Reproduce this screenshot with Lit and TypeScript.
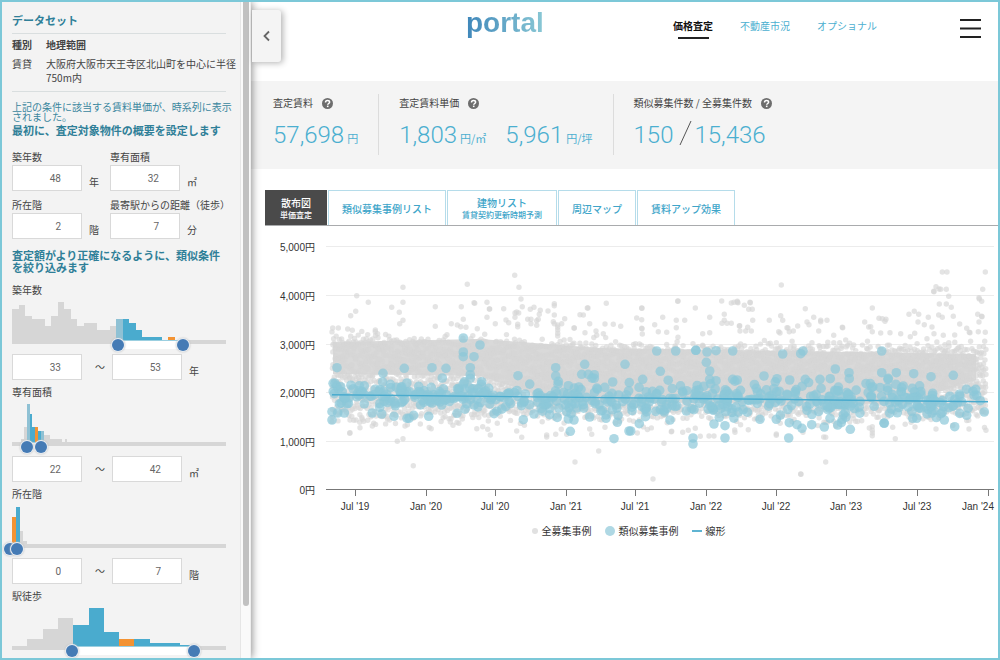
import { LitElement, html, svg, css } from "lit";
import { customElement, property } from "lit/decorators.js";

type Point = [number, number];

/* ---------- scatter data ---------- */

// Plot positions are kept on a fine grid, three steps to one chart unit.
const GRID = 3;
const HALF = 1110;

const ALL_LEFT: Point[] = [
  [764, 136], [777, 172], [622, 163], [429, 172], [290, 197], [325, 217], [429, 217], [395, 232], [287, 244],
  [272, 257], [418, 247], [429, 271], [419, 281], [526, 230], [526, 289], [604, 230], [610, 268], [642, 218],
  [644, 220], [681, 217], [688, 237], [689, 237], [681, 262], [706, 281], [731, 236], [738, 270], [746, 278],
  [783, 207], [787, 230], [765, 249], [770, 246], [776, 249], [765, 262], [773, 283], [773, 290], [822, 232],
  [811, 238], [841, 241], [838, 253], [864, 243], [883, 221], [883, 227], [883, 255], [803, 268], [813, 268],
  [830, 272], [835, 268], [813, 281], [830, 286], [880, 275], [883, 281], [905, 281], [914, 266], [943, 294],
  [942, 294], [960, 254], [970, 255], [982, 234], [984, 234], [989, 281], [1039, 220], [1035, 282], [1060, 283],
  [1082, 289], [574, 281], [592, 285], [218, 294], [235, 294], [263, 297], [277, 301], [346, 300], [346, 305],
  [893, 285], [893, 292], [893, 300], [893, 310], [893, 318], [618, 292], [602, 290], [652, 296], [1030, 311],
  [975, 308], [1008, 303], [1010, 316], [269, 610], [270, 608], [300, 593], [337, 588], [412, 634], [429, 626],
  [435, 588], [460, 707], [481, 582], [571, 576], [683, 598], [691, 615], [712, 580], [770, 603], [785, 622],
  [860, 615], [860, 621], [887, 613], [904, 598], [945, 696], [1016, 663], [995, 613], [270, 570], [288, 570],
  [307, 568], [920, 613], [989, 597], [1035, 592], [607, 567], [685, 573],
];

const ALL_RIGHT: Point[] = [
  [35, 234], [36, 235], [20, 264], [35, 269], [35, 295], [36, 296], [37, 312], [74, 284], [85, 305], [98, 262],
  [110, 307], [144, 213], [143, 214], [139, 271], [139, 293], [144, 322], [164, 271], [196, 234], [239, 262],
  [218, 311], [239, 308], [275, 213], [283, 253], [283, 271], [276, 280], [291, 280], [304, 280], [304, 219],
  [312, 217], [322, 214], [324, 218], [322, 217], [343, 226], [356, 238], [360, 217], [361, 218], [367, 238],
  [368, 271], [329, 287], [328, 288], [353, 292], [364, 303], [330, 303], [347, 303], [418, 271], [454, 165],
  [452, 257], [458, 271], [471, 293], [474, 294], [478, 305], [490, 303], [503, 288], [526, 236], [531, 276],
  [537, 284], [551, 262], [572, 271], [572, 275], [591, 271], [566, 303], [637, 292], [638, 293], [611, 316],
  [704, 276], [716, 291], [722, 290], [727, 305], [727, 234], [747, 265], [757, 266], [768, 268], [765, 274],
  [780, 308], [752, 309], [812, 311], [837, 253], [853, 244], [866, 253], [864, 276], [883, 284], [895, 262],
  [906, 291], [912, 311], [854, 310], [841, 320], [937, 126], [951, 126], [1066, 126], [918, 170], [911, 184],
  [912, 185], [927, 177], [932, 178], [949, 178], [956, 199], [928, 222], [949, 222], [964, 232], [926, 255],
  [937, 262], [970, 259], [989, 282], [1058, 178], [1047, 203], [1048, 207], [1055, 214], [1043, 253],
  [1055, 259], [1056, 260], [1047, 276], [1010, 295], [1018, 307], [1020, 308], [1045, 305], [1066, 307],
  [940, 316], [974, 315], [1064, 334], [446, 305], [450, 309], [22, 609], [102, 640], [69, 747], [125, 604],
  [124, 605], [158, 607], [175, 601], [211, 619], [237, 618], [252, 618], [314, 600], [315, 607], [355, 599],
  [439, 612], [439, 616], [512, 732], [513, 733], [581, 621], [587, 622], [587, 696], [519, 607], [796, 626],
  [727, 590], [727, 601], [727, 609], [727, 617], [718, 594], [855, 591], [918, 597], [1017, 597], [1068, 601],
  [788, 592], [695, 572], [196, 595],
];

const SIMILAR_LEFT: Point[] = [
  [231, 413], [369, 430], [433, 415], [516, 413], [558, 415], [547, 444], [610, 324], [610, 366], [610, 380],
  [660, 345], [642, 380], [631, 413], [631, 434], [631, 445], [774, 437], [887, 413], [887, 438], [895, 454],
  [925, 467], [974, 403], [965, 433], [985, 433], [1003, 434], [1003, 445], [1095, 403], [1058, 456], [216, 570],
  [216, 545], [233, 549], [253, 549], [337, 549], [365, 552], [402, 559], [441, 565], [461, 556], [506, 559],
  [591, 550], [790, 569], [822, 552], [931, 604], [925, 567], [942, 570], [989, 561], [1038, 565], [1062, 626],
  [1072, 577], [1107, 603], [391, 463], [225, 460], [242, 470], [476, 469], [298, 467], [665, 455], [664, 463],
  [610, 462], [640, 476], [655, 476], [447, 565], [916, 524], [920, 545], [950, 534], [545, 525], [642, 525],
];

const SIMILAR_RIGHT: Point[] = [
  [80, 363], [137, 363], [197, 361], [198, 361], [231, 366], [258, 362], [308, 363], [91, 424], [229, 397],
  [239, 423], [38, 448], [258, 452], [239, 448], [308, 448], [322, 450], [402, 438], [458, 372], [512, 371],
  [519, 363], [616, 417], [657, 428], [658, 446], [755, 363], [755, 428], [799, 428], [851, 431], [903, 440],
  [970, 436], [774, 448], [775, 445], [441, 446], [479, 450], [526, 448], [570, 448], [601, 446], [189, 624],
  [189, 642], [285, 624], [285, 587], [476, 624], [28, 581], [2, 603], [120, 570], [252, 582], [390, 568],
  [439, 568], [478, 578], [501, 584], [516, 595], [545, 584], [583, 591], [623, 585], [661, 598], [762, 579],
  [763, 580], [860, 565], [974, 590], [1063, 546], [943, 570], [1010, 556], [1037, 478], [1051, 512],
  [911, 541], [634, 578], [637, 568], [728, 470], [848, 565], [268, 562], [287, 545], [50, 545],
];

function randomSource(seed: number) {
  return () => {
    seed = (seed + 0x6d2b79f5) | 0;
    let t = Math.imul(seed ^ (seed >>> 15), 1 | seed);
    t = (t + Math.imul(t ^ (t >>> 7), 61 | t)) ^ t;
    return ((t ^ (t >>> 14)) >>> 0) / 4294967296;
  };
}

const shift = (points: Point[]): Point[] => points.map(([x, y]) => [x + HALF, y]);

function allListings(): Point[] {
  const rnd = randomSource(7);
  const points: Point[] = [];
  for (let column = 0; column < 330; column++) {
    const x = 216 + column * 5.95;
    const t = column / 329;
    const top = 308 + Math.min(t * 2, 1) * 34 + rnd() * 20;
    const bottom = 566 - rnd() * 26;
    for (let i = 0; i < 10; i++) {
      points.push([x + rnd() * 5, top + (bottom - top) * ((i + rnd()) / 10)]);
    }
    if (rnd() < 0.25) points.push([x, top - rnd() * 18]);
    if (rnd() < 0.35) points.push([x, bottom + rnd() * 34]);
  }
  return [...points, ...ALL_LEFT, ...shift(ALL_RIGHT)];
}

function similarListings(): Point[] {
  const rnd = randomSource(21);
  const points: Point[] = [];
  const spread = () => (rnd() + rnd() - 1);
  for (let i = 0; i < 130; i++) points.push([218 + rnd() * 482, 498 + spread() * 46]);
  for (let i = 0; i < 350; i++) points.push([700 + rnd() * 1330, 508 + spread() * 64]);
  for (let i = 0; i < 24; i++) points.push([2010 + rnd() * 150, 520 + spread() * 46]);
  return [...points, ...SIMILAR_LEFT, ...shift(SIMILAR_RIGHT)];
}

const place = (n: number) => Math.round((n / GRID) * 10) / 10;

@customElement("scatter-chart")
class ScatterChart extends LitElement {
  static styles = css`
    :host { display: block; }
    svg { display: block; width: 100%; height: auto; overflow: visible; }
    .axis-text { font: 10px "Liberation Sans", "Noto Sans CJK JP", sans-serif; fill: #333; }
    .end { text-anchor: end; }
    .middle { text-anchor: middle; }
    .grid { stroke: #ececec; }
    .axis { stroke: #777; }
    .core { fill: #d9d9d9; }
    .all { fill: #d6d6d6; fill-opacity: 0.65; }
    .similar { fill: #8cc8d9; fill-opacity: 0.7; }
    .trend { stroke: #4aabce; stroke-width: 1.4; }
    .legend { display: flex; justify-content: center; align-items: center; gap: 13px; margin: 8px 6px 0 0;
      padding: 0; list-style: none; font-size: 10px; line-height: 16px; color: #333; }
    .legend li { display: flex; align-items: center; gap: 4px; }
    .dot { width: 6px; height: 6px; border-radius: 50%; background: #e1e1e1; }
    .dot.big { width: 10px; height: 10px; background: #afd8e4; }
    .dash { width: 10px; height: 2px; background: #5fb4d2; }
  `;

  render() {
    const ticks: [number, string][] = [
      [95, "Jul '19"], [166, "Jan '20"], [235, "Jul '20"], [306, "Jan '21"], [375, "Jul '21"],
      [446, "Jan '22"], [516, "Jul '22"], [586, "Jan '23"], [657, "Jul '23"], [728, "Jan '24"],
    ];
    return html`
      <svg viewBox="5 0 733 285" role="img" aria-label="散布図">
        ${[5, 4, 3, 2, 1, 0].map((k, i) => {
          const y = [16, 65, 114, 162, 211, 259][i] + 0.5;
          return svg`
            <line class=${k ? "grid" : "axis"} x1="66" x2="734" y1=${y} y2=${y}></line>
            <text class="axis-text end" x="55" y=${y + 4}>${k ? k + ",000" : "0"}円</text>`;
        })}
        ${ticks.map(([x, label], i) => svg`
          <line class="axis" x1=${x + 0.5} x2=${x + 0.5} y1="260" y2="266"></line>
          <text class="axis-text ${i === 9 ? "end" : "middle"}" x=${i === 9 ? 734 : x} y="280">${label}</text>`)}
        <path class="core" d="M73 112L220 109L340 118L716 124V150L640 174L300 172L220 146L73 144Z"></path>
        ${allListings().map(([x, y]) => svg`<circle class="all" cx=${place(x)} cy=${place(y)} r="2.7"></circle>`)}
        ${similarListings().map(([x, y]) => svg`<circle class="similar" cx=${place(x)} cy=${place(y)} r="4.8"></circle>`)}
        <line class="trend" x1="72" y1="164.7" x2="728" y2="171.7"></line>
      </svg>
      <ul class="legend">
        <li><span class="dot"></span>全募集事例</li>
        <li><span class="dot big"></span>類似募集事例</li>
        <li><span class="dash"></span>線形</li>
      </ul>`;
  }
}

/* ---------- range filters ---------- */

interface Bar { h: number; c?: string; }

interface Filter {
  id: string; label: string; unit: string; from: number; to: number;
  handles: [number, number]; binWidth: number; start: number; bars: Bar[];
}

const LIGHT = "light";
const BLUE = "blue";
const ORANGE = "orange";
const bars = (...list: (number | [number, string])[]): Bar[] =>
  list.map((v) => (typeof v === "number" ? { h: v } : { h: v[0], c: v[1] }));

const FILTERS: Filter[] = [
  { id: "age", label: "築年数", unit: "年", from: 33, to: 53, handles: [106, 171], binWidth: 6.5, start: 0,
    bars: bars(31, 35, 24, 21, 21, 14, 24, 38, 31, 21, 14, 17, 17, 10, 10, 14, [21, LIGHT], [21, BLUE], [17, BLUE],
      [10, BLUE], [3, BLUE], [3, BLUE], [3, BLUE], 0, [3, ORANGE]) },
  { id: "area", label: "専有面積", unit: "㎡", from: 22, to: 42, handles: [15, 29], binWidth: 2.92, start: 3,
    bars: bars(3, 15, [38, LIGHT], [28, BLUE], [15, BLUE], [15, ORANGE], [11, BLUE], [11, LIGHT], 7, 7, 3, 3, 3, 3, 0, 3) },
  { id: "floor", label: "所在階", unit: "階", from: 0, to: 7, handles: [-2, 5], binWidth: 3.76, start: 0,
    bars: bars([27, ORANGE], [37, BLUE], 13, 3) },
  { id: "walk", label: "駅徒歩", unit: "分", from: 6, to: 13, handles: [60, 182], binWidth: 15.3, start: 1,
    bars: bars(7, 17, 28, [21, BLUE], [38, BLUE], [14, BLUE], [7, ORANGE], [7, BLUE], [3, BLUE], [3, BLUE], [1, BLUE]) },
];

@customElement("range-filter")
class RangeFilter extends LitElement {
  @property({ attribute: false }) filter!: Filter;

  static styles = css`
    :host { display: block; margin-bottom: 4px; }
    * { box-sizing: border-box; }
    .title { font-size: 10px; line-height: 16px; }
    .stack { display: grid; width: 214px; height: 53px; margin-bottom: 3px; }
    .stack > * { grid-area: 1 / 1; }
    svg { width: 214px; height: 53px; overflow: visible; }
    .gray { fill: #d6d6d6; }
    .blue { fill: #4aabce; }
    .light { fill: #8fc1d4; }
    .orange { fill: #f39333; }
    .window { fill: #fff; }
    .edge { fill: #9bcfe0; }
    input[type="range"] { appearance: none; -webkit-appearance: none; align-self: end; width: 230px; height: 12px;
      margin: 0 0 0 -8px; background: none; pointer-events: none; outline: none; }
    input[type="range"]::-webkit-slider-thumb { -webkit-appearance: none; box-sizing: border-box; width: 12px; height: 12px;
      border: 0; border-radius: 50%; background: #457bb5; box-shadow: 0 0 0 1px #e8edf2, 0 0 2px 1px #bbb; pointer-events: auto; }
    .row { display: flex; align-items: center; font-size: 10px; }
    input[type="text"] { width: 70px; height: 26px; padding: 0 20px 0 4px; border: 1px solid #d9d9d9; border-radius: 0;
      background: #fff; color: #666; font: 10px "Roboto", sans-serif; text-align: right; }
    .tilde { width: 30px; padding-left: 6px; text-align: center; }
    .unit { padding: 8px 0 0 7px; line-height: 16px; }
  `;

  render() {
    const f = this.filter;
    const [a, b] = f.handles;
    return html`
      <label class="title" for="from">${f.label}</label>
      <div class="stack">
        <svg aria-hidden="true">
          <rect class="gray" x="0" y="42" width="214" height="4"></rect>
          <rect class="window" x=${a} y="43" width=${b - a} height="8"></rect>
          <rect class="edge" x=${a} y="42" width=${b - a} height="1"></rect>
          ${f.bars.map((bar, i) => svg`<rect class=${bar.c ?? "gray"} shape-rendering="crispEdges"
            x=${(f.start + i) * f.binWidth} y=${42 - bar.h} width=${f.binWidth} height=${bar.h}></rect>`)}
        </svg>
        <input type="range" min="0" max="218" .value=${String(a + 2)} aria-label="${f.label} 下限">
        <input type="range" min="0" max="218" .value=${String(b + 2)} aria-label="${f.label} 上限">
      </div>
      <div class="row">
        <input type="text" id="from" .value=${String(f.from)}>
        <span class="tilde">～</span>
        <input type="text" id="to" aria-label="${f.label} 上限" .value=${String(f.to)}>
        <span class="unit">${f.unit}</span>
      </div>`;
  }
}

/* ---------- page ---------- */

@customElement("app-root")
class AppRoot extends LitElement {
  static styles = css`
    :host { display: grid; grid-template-columns: 249px minmax(0, 1fr); height: 100vh; box-sizing: border-box;
      border: 2px solid #7cc8d8; background: #fff; color: #444; overflow: hidden;
      font: 10px/16px "Noto Sans CJK JP", sans-serif; }
    * { box-sizing: border-box; }
    a { color: inherit; text-decoration: none; }
    button { font: inherit; }

    .side { position: relative; z-index: 2; display: grid; grid-template-columns: minmax(0, 1fr) 11px; min-height: 0;
      background: #f3f3f3; box-shadow: 1px 0 8px rgba(0, 0, 0, 0.45); }
    .side-body { min-height: 0; padding: 9px 0 0 10px; overflow: hidden auto; scrollbar-width: none; white-space: nowrap; }
    .track { border-left: 1px solid #e6e6e6; border-right: 1px solid #eee; background: #fafafa; padding: 0 2px; }
    .thumb { height: 92%; width: 6px; border-radius: 0 0 3px 3px; background: #c1c1c1; }
    .head { margin: 0; color: #2f7f98; font-size: 11px; font-weight: 700; line-height: 12px; }
    .data-title { width: 214px; padding: 3px 0 7px; border-bottom: 1px solid #d9dedf; }
    .facts { display: grid; grid-template-columns: 34px auto; row-gap: 5px; width: 214px; margin: 0; padding: 4px 0 6px;
      border-bottom: 1px solid #d9dedf; line-height: 14px; }
    .facts dt, .facts dd { margin: 0; }
    .facts .strong { font-weight: 700; }
    .note { margin: 10px 0 2px; color: #3a869e; line-height: 10px; }
    .fields { display: grid; grid-template-columns: 98px auto; row-gap: 5px; margin: 12px 0 10px; }
    .field label { display: block; line-height: 17px; }
    .field div { display: flex; align-items: center; }
    .field input { width: 70px; height: 26px; padding: 0 20px 0 4px; border: 1px solid #d9d9d9; border-radius: 0;
      background: #fff; color: #666; font: 10px "Roboto", sans-serif; text-align: right; }
    .field .unit { padding: 8px 0 0 7px; }
    .filters { margin-top: 9px; }

    .main { position: relative; display: flex; flex-direction: column; min-width: 0; }
    .collapse { position: absolute; z-index: 3; left: 1px; top: 8px; width: 29px; height: 52px; padding: 0; border: 0;
      border-radius: 0 3px 3px 0; background: #f4f4f4; box-shadow: 2px 1px 6px rgba(0, 0, 0, 0.3); }
    .collapse svg { display: block; margin: auto; }
    header { display: flex; align-items: flex-start; height: 79px; padding: 0 17px 0 0; }
    .logo { width: 207px; margin-left: 215px; font: 700 28px/32px "Liberation Sans", sans-serif; padding-top: 4px; height: 42px; }
    .logo span { display: inline-block; background: linear-gradient(90deg, #3f87ba, #8ac8d5); background-clip: text;
      -webkit-background-clip: text; color: transparent; line-height: 34px; }
    nav { display: flex; flex: 1; gap: 27px; padding-top: 16px; color: #4bafd0; }
    nav .current { display: flex; flex-direction: column; align-items: center; color: #111; font-weight: 700; }
    nav .current::after { content: ""; width: 31px; height: 2px; margin-top: 3px; background: #222; }
    .menu { padding: 0; margin-top: 16px; border: 0; background: none; height: 20px; width: 21px; }
    .menu svg { display: block; }

    .stats { display: flex; padding: 13px 0 14px 22px; background: #f4f4f4; }
    .stat { height: 61px; padding-right: 20px; margin-right: 20px; border-right: 1px solid #dcdcdc; }
    .stat:last-child { border: 0; margin: 0; padding: 0; }
    .stat-title { display: flex; align-items: center; gap: 9px; line-height: 18px; }
    .help { display: block; }
    .values { display: flex; align-items: baseline; margin-top: 8px; color: #4bafd0; font-size: 11px; line-height: 30px; }
    .figure { margin-right: 3px; font-family: "Roboto", sans-serif; font-size: 24px; font-weight: 300; }
    .next { margin-left: 19px; }
    .slash { align-self: center; margin: 0 2px 4px 3px; }

    .tabs { display: flex; gap: 1px; margin: 21px 0 0 14px; border-bottom: 1px solid #a9abad; }
    .tab { display: flex; flex-direction: column; align-items: center; justify-content: center; height: 35px;
      padding: 0 13px; border: 1px solid #b5dcea; border-bottom: 0; background: #fff; color: #40a5c9;
      font-weight: 500; line-height: 13px; white-space: nowrap; }
    .tab small { font-size: 8px; line-height: 11px; }
    .tab.double { padding: 0 14px; }
    .tab.active { border-color: #4a4a4a; background: #4a4a4a; color: #fff; }
    .chart { margin: 4px 0 0 14px; }
  `;

  private field(id: string, label: string, value: number, unit: string) {
    return html`<div class="field">
      <label for=${id}>${label}</label>
      <div><input id=${id} type="text" .value=${String(value)}><span class="unit">${unit}</span></div>
    </div>`;
  }

  private help() {
    return html`<svg class="help" width="11" height="11" viewBox="0 0 22 22" aria-hidden="true">
      <circle cx="11" cy="11" r="11" fill="#6d6d6d"></circle>
      <path d="M7 8.800C7 6.200 9 5 11.100 5c2.200 0 4.100 1.300 4.100 3.300 0 2.700-3.800 2.700-3.800 5.400" fill="none" stroke="#fff" stroke-width="3"></path>
      <rect x="9.800" y="15.200" width="3.200" height="3" fill="#fff"></rect>
    </svg>`;
  }

  render() {
    return html`
      <aside class="side">
        <div class="side-body">
          <h2 class="head data-title">データセット</h2>
          <dl class="facts">
            <dt class="strong">種別</dt><dd class="strong">地理範囲</dd>
            <dt>賃貸</dt><dd>大阪府大阪市天王寺区北山町を中心に半径<br>750m内</dd>
          </dl>
          <p class="note">上記の条件に該当する賃料単価が、時系列に表示<br>されました。</p>
          <h3 class="head">最初に、査定対象物件の概要を設定します</h3>
          <div class="fields">
            ${this.field("years", "築年数", 48, "年")}
            ${this.field("size", "専有面積", 32, "㎡")}
            ${this.field("storey", "所在階", 2, "階")}
            ${this.field("distance", "最寄駅からの距離（徒歩）", 7, "分")}
          </div>
          <h3 class="head">査定額がより正確になるように、類似条件<br>を絞り込みます</h3>
          <div class="filters">
            ${FILTERS.map((f) => html`<range-filter .filter=${f}></range-filter>`)}
          </div>
        </div>
        <div class="track"><div class="thumb"></div></div>
      </aside>

      <main class="main">
        <button class="collapse" aria-label="閉じる">
          <svg width="10" height="12" viewBox="0 0 10 12"><path d="M7 1.500L2.500 6L7 10.500" fill="none" stroke="#666" stroke-width="1.800"></path></svg>
        </button>
        <header>
          <a class="logo" href="#"><span>portal</span></a>
          <nav>
            <a class="current" href="#">価格査定</a>
            <a href="#">不動産市況</a>
            <a href="#">オプショナル</a>
          </nav>
          <button class="menu" aria-label="メニュー">
            <svg width="21" height="21"><path d="M0 2H21M0 10.500H21M0 19H21" stroke="#222" stroke-width="2"></path></svg>
          </button>
        </header>

        <section class="stats">
          <div class="stat">
            <div class="stat-title">査定賃料${this.help()}</div>
            <div class="values"><span class="figure">57,698</span>円</div>
          </div>
          <div class="stat">
            <div class="stat-title">査定賃料単価${this.help()}</div>
            <div class="values">
              <span class="figure">1,803</span>円/㎡
              <span class="figure next">5,961</span>円/坪
            </div>
          </div>
          <div class="stat">
            <div class="stat-title">類似募集件数 / 全募集件数${this.help()}</div>
            <div class="values">
              <span class="figure">150</span>
              <svg class="slash" width="13" height="26"><path d="M1 25L12 1" stroke="#555"></path></svg>
              <span class="figure">15,436</span>
            </div>
          </div>
        </section>

        <div class="tabs">
          <button class="tab double active">散布図<small>単価査定</small></button>
          <button class="tab">類似募集事例リスト</button>
          <button class="tab double">建物リスト<small>賃貸契約更新時期予測</small></button>
          <button class="tab">周辺マップ</button>
          <button class="tab">賃料アップ効果</button>
        </div>
        <scatter-chart class="chart"></scatter-chart>
      </main>`;
  }
}
